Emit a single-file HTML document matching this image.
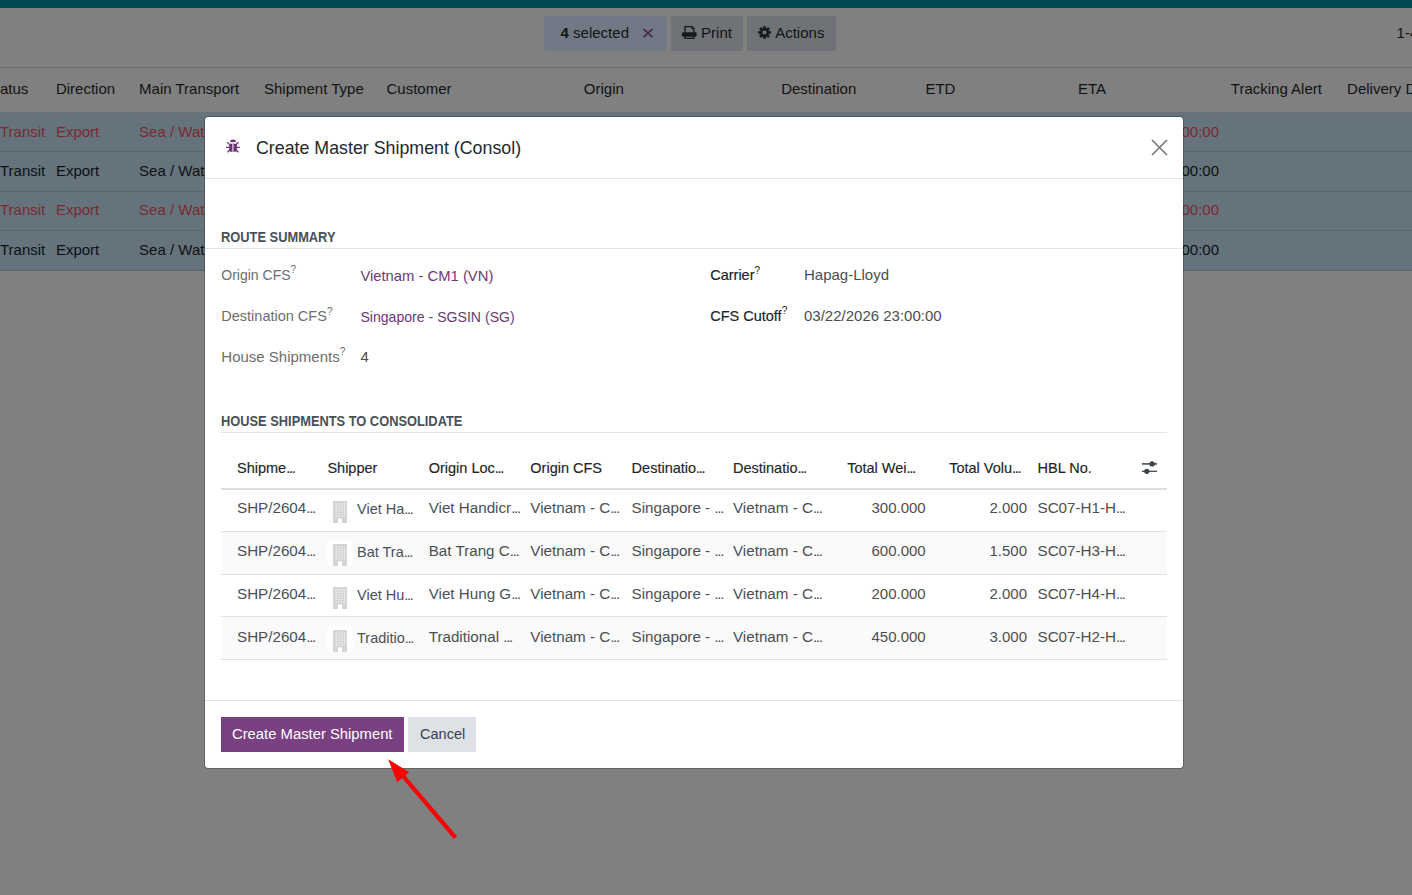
<!DOCTYPE html>
<html><head><meta charset="utf-8"><title>Create Master Shipment</title>
<style>
html,body{margin:0;padding:0;width:1412px;height:895px;overflow:hidden;background:#808080;font-family:"Liberation Sans",sans-serif;}
.t{position:absolute;white-space:nowrap;line-height:1;}
.r{position:absolute;}
.el{letter-spacing:-1.3px;margin-right:1.3px}
sup{font-size:10px;vertical-align:top;position:relative;top:-2.5px;margin-left:0;line-height:1;font-weight:normal;-webkit-text-stroke:0}
</style></head><body>
<div class="r" style="left:0px;top:0px;width:1412px;height:8px;background:#004b52"></div>
<div class="r" style="left:0px;top:67px;width:1412px;height:1px;background:#6c7073"></div>
<div class="r" style="left:544px;top:16px;width:123px;height:35px;background:#707985;border-radius:4px"></div>
<div class="r" style="left:671px;top:16px;width:72px;height:35px;background:#6f7377;border-radius:0"></div>
<div class="r" style="left:747px;top:16px;width:89px;height:35px;background:#6f7377;border-radius:0"></div>
<div class="t" style="left:560.60px;top:24.70px;font-size:15px;color:#111417;font-weight:normal;"><b>4</b> selected</div>
<svg class="r" style="left:642px;top:28px" width="12" height="10" viewBox="0 0 12 10"><path d="M1.5 0.8 L10.5 9.2 M10.5 0.8 L1.5 9.2" stroke="#4d2650" stroke-width="1.6"/></svg>
<svg class="r" style="left:682px;top:26px" width="15" height="13" viewBox="0 0 15 13"><path d="M3 6.5V0.65H10.1L12 2.55V6.5" stroke="#17191c" stroke-width="1.3" fill="none"/><path d="M9.8 0.65V2.9H12" stroke="#17191c" stroke-width="0.9" fill="none"/><rect x="0" y="6.3" width="14.6" height="4.4" rx="1.2" fill="#17191c"/><path d="M3 10.5V12.35H12V10.5" stroke="#17191c" stroke-width="1.3" fill="none"/></svg>
<div class="t" style="left:701.10px;top:24.70px;font-size:15px;color:#111417;font-weight:normal;">Print</div>
<svg class="r" style="left:758px;top:26px" width="13" height="13" viewBox="0 0 13 13"><path fill="#17191c" fill-rule="evenodd" d="M5.16 2.10 L5.04 0.17 L7.96 0.17 L7.84 2.10 L8.66 2.44 L9.94 0.99 L12.01 3.06 L10.56 4.34 L10.90 5.16 L12.83 5.04 L12.83 7.96 L10.90 7.84 L10.56 8.66 L12.01 9.94 L9.94 12.01 L8.66 10.56 L7.84 10.90 L7.96 12.83 L5.04 12.83 L5.16 10.90 L4.34 10.56 L3.06 12.01 L0.99 9.94 L2.44 8.66 L2.10 7.84 L0.17 7.96 L0.17 5.04 L2.10 5.16 L2.44 4.34 L0.99 3.06 L3.06 0.99 L4.34 2.44z M8.60 6.50a2.1 2.1 0 1 0 -4.2 0a2.1 2.1 0 1 0 4.2 0z"/></svg>
<div class="t" style="left:775.20px;top:24.70px;font-size:15px;color:#111417;font-weight:normal;">Actions</div>
<div class="t" style="left:1396.60px;top:25.10px;font-size:15px;color:#111417;font-weight:normal;">1-4</div>
<div class="t" style="left:0.00px;top:81.30px;font-size:15px;color:#101214;font-weight:normal;">atus</div>
<div class="t" style="left:55.90px;top:81.30px;font-size:15px;color:#101214;font-weight:normal;">Direction</div>
<div class="t" style="left:139.10px;top:81.30px;font-size:15px;color:#101214;font-weight:normal;">Main Transport</div>
<div class="t" style="left:264.00px;top:81.30px;font-size:15px;color:#101214;font-weight:normal;">Shipment Type</div>
<div class="t" style="left:386.50px;top:81.30px;font-size:15px;color:#101214;font-weight:normal;">Customer</div>
<div class="t" style="left:583.80px;top:81.30px;font-size:15px;color:#101214;font-weight:normal;">Origin</div>
<div class="t" style="left:781.20px;top:81.30px;font-size:15px;color:#101214;font-weight:normal;">Destination</div>
<div class="t" style="left:925.40px;top:81.30px;font-size:15px;color:#101214;font-weight:normal;">ETD</div>
<div class="t" style="left:1078.00px;top:81.30px;font-size:15px;color:#101214;font-weight:normal;">ETA</div>
<div class="t" style="left:1230.80px;top:81.30px;font-size:15px;color:#101214;font-weight:normal;">Tracking Alert</div>
<div class="t" style="left:1347.10px;top:81.30px;font-size:15px;color:#101214;font-weight:normal;">Delivery Date</div>
<div class="r" style="left:0px;top:112px;width:1412px;height:1px;background:#6c7073"></div>
<div class="r" style="left:0px;top:113px;width:1412px;height:158px;background:#65737d"></div>
<div class="r" style="left:0px;top:151px;width:1412px;height:1px;background:#59666e"></div>
<div class="r" style="left:0px;top:191px;width:1412px;height:1px;background:#59666e"></div>
<div class="r" style="left:0px;top:230px;width:1412px;height:1px;background:#59666e"></div>
<div class="r" style="left:0px;top:270px;width:1412px;height:1px;background:#59666e"></div>
<div class="t" style="left:0.00px;top:123.90px;font-size:15px;color:#7c2a2e;font-weight:normal;">Transit</div>
<div class="t" style="left:55.90px;top:123.90px;font-size:15px;color:#7c2a2e;font-weight:normal;">Export</div>
<div class="t" style="left:139.10px;top:123.90px;font-size:15px;color:#7c2a2e;font-weight:normal;">Sea / Water</div>
<div class="t" style="right:193.00px;top:123.90px;font-size:15px;color:#7c2a2e;font-weight:normal;">03/25/2026 10:00:00</div>
<div class="t" style="left:0.00px;top:162.90px;font-size:15px;color:#0e1012;font-weight:normal;">Transit</div>
<div class="t" style="left:55.90px;top:162.90px;font-size:15px;color:#0e1012;font-weight:normal;">Export</div>
<div class="t" style="left:139.10px;top:162.90px;font-size:15px;color:#0e1012;font-weight:normal;">Sea / Water</div>
<div class="t" style="right:193.00px;top:162.90px;font-size:15px;color:#0e1012;font-weight:normal;">03/25/2026 10:00:00</div>
<div class="t" style="left:0.00px;top:202.30px;font-size:15px;color:#7c2a2e;font-weight:normal;">Transit</div>
<div class="t" style="left:55.90px;top:202.30px;font-size:15px;color:#7c2a2e;font-weight:normal;">Export</div>
<div class="t" style="left:139.10px;top:202.30px;font-size:15px;color:#7c2a2e;font-weight:normal;">Sea / Water</div>
<div class="t" style="right:193.00px;top:202.30px;font-size:15px;color:#7c2a2e;font-weight:normal;">03/25/2026 10:00:00</div>
<div class="t" style="left:0.00px;top:241.50px;font-size:15px;color:#0e1012;font-weight:normal;">Transit</div>
<div class="t" style="left:55.90px;top:241.50px;font-size:15px;color:#0e1012;font-weight:normal;">Export</div>
<div class="t" style="left:139.10px;top:241.50px;font-size:15px;color:#0e1012;font-weight:normal;">Sea / Water</div>
<div class="t" style="right:193.00px;top:241.50px;font-size:15px;color:#0e1012;font-weight:normal;">03/25/2026 10:00:00</div>
<div class="r" style="left:204px;top:116px;width:978px;height:651px;background:#fff;background-clip:padding-box;border:1px solid rgba(0,0,0,.22);border-radius:4px">
</div>
<div class="r" style="left:205px;top:178px;width:978px;height:1px;background:#dee2e6"></div>
<svg class="r" style="left:220px;top:134px" width="26" height="26" viewBox="0 0 26 26"><path d="M10.2 7.9a2.8 2.3 0 0 1 5.6 0z" fill="#6d3274"/><rect x="9.6" y="8.6" width="7.4" height="1.1" fill="#c9b2cd"/><path d="M9.2 10h7.7v6.3a1.5 1.5 0 0 1-1.5 1.5h-4.7a1.5 1.5 0 0 1-1.5-1.5z" fill="#6d3274"/><rect x="12.1" y="10" width="1.6" height="7.8" fill="#c9b2cd"/><path d="M7.2 8.2L9.8 10.6M18.6 8.2L16 10.6M6.1 13.4H9.2M16.9 13.4H19.8M7.4 18.3L9.6 16M18.6 18.3L16.4 16" stroke="#6d3274" stroke-width="1.2"/></svg>
<div class="t" style="left:255.60px;top:138.54px;font-size:18.5px;color:#24282c;font-weight:normal;transform:scaleX(0.962);transform-origin:0 0">Create Master Shipment (Consol)</div>
<svg class="r" style="left:1151px;top:139px" width="17" height="17" viewBox="0 0 17 17"><path d="M1 1 L16 16 M16 1 L1 16" stroke="#777b80" stroke-width="1.7"/></svg>
<div class="t" style="left:221.30px;top:229.10px;font-size:15px;color:#495057;font-weight:bold;transform:scaleX(0.857);transform-origin:0 0">ROUTE SUMMARY</div>
<div class="r" style="left:205px;top:248px;width:978px;height:1px;background:#e3e3e3"></div>
<div class="t" style="left:221.30px;top:267.75px;font-size:14px;color:#6b6e71;font-weight:normal;">Origin CFS<sup>?</sup></div>
<div class="t" style="left:221.30px;top:309.33px;font-size:14.5px;color:#6b6e71;font-weight:normal;">Destination CFS<sup>?</sup></div>
<div class="t" style="left:221.30px;top:349.00px;font-size:15px;color:#6b6e71;font-weight:normal;">House Shipments<sup>?</sup></div>
<div class="t" style="left:360.40px;top:268.67px;font-size:14.8px;color:#6b3a72;font-weight:normal;">Vietnam - CM1 (VN)</div>
<div class="t" style="left:360.40px;top:310.06px;font-size:14.1px;color:#6b3a72;font-weight:normal;">Singapore - SGSIN (SG)</div>
<div class="t" style="left:360.40px;top:349.87px;font-size:14.8px;color:#4a4e52;font-weight:normal;">4</div>
<div class="t" style="left:710.20px;top:268.13px;font-size:14.5px;color:#212529;font-weight:normal;-webkit-text-stroke:0.18px #212529">Carrier<sup>?</sup></div>
<div class="t" style="left:710.20px;top:308.93px;font-size:14.5px;color:#212529;font-weight:normal;-webkit-text-stroke:0.18px #212529">CFS Cutoff<sup>?</sup></div>
<div class="t" style="left:804.00px;top:266.90px;font-size:15px;color:#4a4e52;font-weight:normal;">Hapag-Lloyd</div>
<div class="t" style="left:804.00px;top:307.90px;font-size:15px;color:#4a4e52;font-weight:normal;">03/22/2026 23:00:00</div>
<div class="t" style="left:221.40px;top:413.10px;font-size:15px;color:#495057;font-weight:bold;transform:scaleX(0.856);transform-origin:0 0">HOUSE SHIPMENTS TO CONSOLIDATE</div>
<div class="r" style="left:221px;top:432px;width:946px;height:1px;background:#e3e3e3"></div>
<div class="t" style="left:237.00px;top:460.63px;font-size:14.5px;color:#212529;font-weight:normal;-webkit-text-stroke:0.15px #212529">Shipme<span class="el">...</span></div>
<div class="t" style="left:327.40px;top:460.63px;font-size:14.5px;color:#212529;font-weight:normal;-webkit-text-stroke:0.15px #212529">Shipper</div>
<div class="t" style="left:428.70px;top:460.63px;font-size:14.5px;color:#212529;font-weight:normal;-webkit-text-stroke:0.15px #212529">Origin Loc<span class="el">...</span></div>
<div class="t" style="left:530.30px;top:460.63px;font-size:14.5px;color:#212529;font-weight:normal;-webkit-text-stroke:0.15px #212529">Origin CFS</div>
<div class="t" style="left:631.60px;top:460.63px;font-size:14.5px;color:#212529;font-weight:normal;-webkit-text-stroke:0.15px #212529">Destinatio<span class="el">...</span></div>
<div class="t" style="left:733.00px;top:460.63px;font-size:14.5px;color:#212529;font-weight:normal;-webkit-text-stroke:0.15px #212529">Destinatio<span class="el">...</span></div>
<div class="t" style="left:847.20px;top:460.63px;font-size:14.5px;color:#212529;font-weight:normal;-webkit-text-stroke:0.15px #212529">Total Wei<span class="el">...</span></div>
<div class="t" style="left:949.20px;top:460.63px;font-size:14.5px;color:#212529;font-weight:normal;-webkit-text-stroke:0.15px #212529">Total Volu<span class="el">...</span></div>
<div class="t" style="left:1037.50px;top:460.63px;font-size:14.5px;color:#212529;font-weight:normal;-webkit-text-stroke:0.15px #212529">HBL No.</div>
<svg class="r" style="left:1136px;top:455px" width="28" height="25" viewBox="0 0 28 25"><path d="M5.9 8.9H21.1" stroke="#3d434a" stroke-width="1.5"/><path d="M5.9 16.3H21.1" stroke="#3d434a" stroke-width="1.25"/><circle cx="16.1" cy="8.9" r="2.7" fill="#3d434a"/><circle cx="10.8" cy="16.3" r="2.6" fill="#3d434a"/></svg>
<div class="r" style="left:221px;top:488px;width:946px;height:2px;background:#d9dee3"></div>
<div class="r" style="left:221px;top:531px;width:946px;height:1px;background:#dee2e6"></div>
<div class="r" style="left:221px;top:532px;width:946px;height:42px;background:#fafafa"></div>
<div class="r" style="left:221px;top:574px;width:946px;height:1px;background:#dee2e6"></div>
<div class="r" style="left:221px;top:616px;width:946px;height:1px;background:#dee2e6"></div>
<div class="r" style="left:221px;top:617px;width:946px;height:42px;background:#fafafa"></div>
<div class="r" style="left:221px;top:659px;width:946px;height:1px;background:#dee2e6"></div>
<div class="r" style="left:327px;top:497.19999999999993px;width:26px;height:26px;background:#fff;border-radius:4px"></div>
<div class="r" style="left:333px;top:500.8px;width:14px;height:22px"><svg width="14" height="22" viewBox="0 0 14 23" preserveAspectRatio="none"><path fill="#d4d4d4" d="M0 0h14v23H9v-4.6H5V23H0z"/><rect x="2.7" y="2.4" width="1.3" height="1.3" fill="#f4f4f4"/><rect x="2.7" y="4.9" width="1.3" height="1.3" fill="#f4f4f4"/><rect x="2.7" y="7.4" width="1.3" height="1.3" fill="#f4f4f4"/><rect x="2.7" y="9.9" width="1.3" height="1.3" fill="#f4f4f4"/><rect x="2.7" y="12.4" width="1.3" height="1.3" fill="#f4f4f4"/><rect x="2.7" y="14.9" width="1.3" height="1.3" fill="#f4f4f4"/><rect x="5.3" y="2.4" width="1.3" height="1.3" fill="#f4f4f4"/><rect x="5.3" y="4.9" width="1.3" height="1.3" fill="#f4f4f4"/><rect x="5.3" y="7.4" width="1.3" height="1.3" fill="#f4f4f4"/><rect x="5.3" y="9.9" width="1.3" height="1.3" fill="#f4f4f4"/><rect x="5.3" y="12.4" width="1.3" height="1.3" fill="#f4f4f4"/><rect x="5.3" y="14.9" width="1.3" height="1.3" fill="#f4f4f4"/><rect x="8.3" y="2.4" width="1.3" height="1.3" fill="#f4f4f4"/><rect x="8.3" y="4.9" width="1.3" height="1.3" fill="#f4f4f4"/><rect x="8.3" y="7.4" width="1.3" height="1.3" fill="#f4f4f4"/><rect x="8.3" y="9.9" width="1.3" height="1.3" fill="#f4f4f4"/><rect x="8.3" y="12.4" width="1.3" height="1.3" fill="#f4f4f4"/><rect x="8.3" y="14.9" width="1.3" height="1.3" fill="#f4f4f4"/><rect x="10.9" y="2.4" width="1.3" height="1.3" fill="#f4f4f4"/><rect x="10.9" y="4.9" width="1.3" height="1.3" fill="#f4f4f4"/><rect x="10.9" y="7.4" width="1.3" height="1.3" fill="#f4f4f4"/><rect x="10.9" y="9.9" width="1.3" height="1.3" fill="#f4f4f4"/><rect x="10.9" y="12.4" width="1.3" height="1.3" fill="#f4f4f4"/><rect x="10.9" y="14.9" width="1.3" height="1.3" fill="#f4f4f4"/></svg></div>
<div class="t" style="left:237.00px;top:499.93px;font-size:15.2px;color:#4a4f54;font-weight:normal;">SHP/2604<span class="el">...</span></div>
<div class="t" style="left:357.00px;top:501.83px;font-size:14.5px;color:#4a4f54;font-weight:normal;">Viet Ha<span class="el">...</span></div>
<div class="t" style="left:428.70px;top:499.93px;font-size:15.2px;color:#4a4f54;font-weight:normal;">Viet Handicr<span class="el">...</span></div>
<div class="t" style="left:530.30px;top:499.93px;font-size:15.2px;color:#4a4f54;font-weight:normal;">Vietnam - C<span class="el">...</span></div>
<div class="t" style="left:631.60px;top:499.93px;font-size:15.2px;color:#4a4f54;font-weight:normal;">Singapore - <span class="el">...</span></div>
<div class="t" style="left:733.00px;top:499.93px;font-size:15.2px;color:#4a4f54;font-weight:normal;">Vietnam - C<span class="el">...</span></div>
<div class="t" style="right:486.30px;top:500.10px;font-size:15px;color:#4a4f54;font-weight:normal;">300.000</div>
<div class="t" style="right:385.00px;top:500.10px;font-size:15px;color:#4a4f54;font-weight:normal;">2.000</div>
<div class="t" style="left:1037.50px;top:499.93px;font-size:15.2px;color:#4a4f54;font-weight:normal;">SC07-H1-H<span class="el">...</span></div>
<div class="r" style="left:327px;top:540.1999999999999px;width:26px;height:26px;background:#fff;border-radius:4px"></div>
<div class="r" style="left:333px;top:543.8px;width:14px;height:22px"><svg width="14" height="22" viewBox="0 0 14 23" preserveAspectRatio="none"><path fill="#d4d4d4" d="M0 0h14v23H9v-4.6H5V23H0z"/><rect x="2.7" y="2.4" width="1.3" height="1.3" fill="#f4f4f4"/><rect x="2.7" y="4.9" width="1.3" height="1.3" fill="#f4f4f4"/><rect x="2.7" y="7.4" width="1.3" height="1.3" fill="#f4f4f4"/><rect x="2.7" y="9.9" width="1.3" height="1.3" fill="#f4f4f4"/><rect x="2.7" y="12.4" width="1.3" height="1.3" fill="#f4f4f4"/><rect x="2.7" y="14.9" width="1.3" height="1.3" fill="#f4f4f4"/><rect x="5.3" y="2.4" width="1.3" height="1.3" fill="#f4f4f4"/><rect x="5.3" y="4.9" width="1.3" height="1.3" fill="#f4f4f4"/><rect x="5.3" y="7.4" width="1.3" height="1.3" fill="#f4f4f4"/><rect x="5.3" y="9.9" width="1.3" height="1.3" fill="#f4f4f4"/><rect x="5.3" y="12.4" width="1.3" height="1.3" fill="#f4f4f4"/><rect x="5.3" y="14.9" width="1.3" height="1.3" fill="#f4f4f4"/><rect x="8.3" y="2.4" width="1.3" height="1.3" fill="#f4f4f4"/><rect x="8.3" y="4.9" width="1.3" height="1.3" fill="#f4f4f4"/><rect x="8.3" y="7.4" width="1.3" height="1.3" fill="#f4f4f4"/><rect x="8.3" y="9.9" width="1.3" height="1.3" fill="#f4f4f4"/><rect x="8.3" y="12.4" width="1.3" height="1.3" fill="#f4f4f4"/><rect x="8.3" y="14.9" width="1.3" height="1.3" fill="#f4f4f4"/><rect x="10.9" y="2.4" width="1.3" height="1.3" fill="#f4f4f4"/><rect x="10.9" y="4.9" width="1.3" height="1.3" fill="#f4f4f4"/><rect x="10.9" y="7.4" width="1.3" height="1.3" fill="#f4f4f4"/><rect x="10.9" y="9.9" width="1.3" height="1.3" fill="#f4f4f4"/><rect x="10.9" y="12.4" width="1.3" height="1.3" fill="#f4f4f4"/><rect x="10.9" y="14.9" width="1.3" height="1.3" fill="#f4f4f4"/></svg></div>
<div class="t" style="left:237.00px;top:542.93px;font-size:15.2px;color:#4a4f54;font-weight:normal;">SHP/2604<span class="el">...</span></div>
<div class="t" style="left:357.00px;top:544.83px;font-size:14.5px;color:#4a4f54;font-weight:normal;">Bat Tra<span class="el">...</span></div>
<div class="t" style="left:428.70px;top:542.93px;font-size:15.2px;color:#4a4f54;font-weight:normal;">Bat Trang C<span class="el">...</span></div>
<div class="t" style="left:530.30px;top:542.93px;font-size:15.2px;color:#4a4f54;font-weight:normal;">Vietnam - C<span class="el">...</span></div>
<div class="t" style="left:631.60px;top:542.93px;font-size:15.2px;color:#4a4f54;font-weight:normal;">Singapore - <span class="el">...</span></div>
<div class="t" style="left:733.00px;top:542.93px;font-size:15.2px;color:#4a4f54;font-weight:normal;">Vietnam - C<span class="el">...</span></div>
<div class="t" style="right:486.30px;top:543.10px;font-size:15px;color:#4a4f54;font-weight:normal;">600.000</div>
<div class="t" style="right:385.00px;top:543.10px;font-size:15px;color:#4a4f54;font-weight:normal;">1.500</div>
<div class="t" style="left:1037.50px;top:542.93px;font-size:15.2px;color:#4a4f54;font-weight:normal;">SC07-H3-H<span class="el">...</span></div>
<div class="r" style="left:327px;top:583.1999999999999px;width:26px;height:26px;background:#fff;border-radius:4px"></div>
<div class="r" style="left:333px;top:586.8px;width:14px;height:22px"><svg width="14" height="22" viewBox="0 0 14 23" preserveAspectRatio="none"><path fill="#d4d4d4" d="M0 0h14v23H9v-4.6H5V23H0z"/><rect x="2.7" y="2.4" width="1.3" height="1.3" fill="#f4f4f4"/><rect x="2.7" y="4.9" width="1.3" height="1.3" fill="#f4f4f4"/><rect x="2.7" y="7.4" width="1.3" height="1.3" fill="#f4f4f4"/><rect x="2.7" y="9.9" width="1.3" height="1.3" fill="#f4f4f4"/><rect x="2.7" y="12.4" width="1.3" height="1.3" fill="#f4f4f4"/><rect x="2.7" y="14.9" width="1.3" height="1.3" fill="#f4f4f4"/><rect x="5.3" y="2.4" width="1.3" height="1.3" fill="#f4f4f4"/><rect x="5.3" y="4.9" width="1.3" height="1.3" fill="#f4f4f4"/><rect x="5.3" y="7.4" width="1.3" height="1.3" fill="#f4f4f4"/><rect x="5.3" y="9.9" width="1.3" height="1.3" fill="#f4f4f4"/><rect x="5.3" y="12.4" width="1.3" height="1.3" fill="#f4f4f4"/><rect x="5.3" y="14.9" width="1.3" height="1.3" fill="#f4f4f4"/><rect x="8.3" y="2.4" width="1.3" height="1.3" fill="#f4f4f4"/><rect x="8.3" y="4.9" width="1.3" height="1.3" fill="#f4f4f4"/><rect x="8.3" y="7.4" width="1.3" height="1.3" fill="#f4f4f4"/><rect x="8.3" y="9.9" width="1.3" height="1.3" fill="#f4f4f4"/><rect x="8.3" y="12.4" width="1.3" height="1.3" fill="#f4f4f4"/><rect x="8.3" y="14.9" width="1.3" height="1.3" fill="#f4f4f4"/><rect x="10.9" y="2.4" width="1.3" height="1.3" fill="#f4f4f4"/><rect x="10.9" y="4.9" width="1.3" height="1.3" fill="#f4f4f4"/><rect x="10.9" y="7.4" width="1.3" height="1.3" fill="#f4f4f4"/><rect x="10.9" y="9.9" width="1.3" height="1.3" fill="#f4f4f4"/><rect x="10.9" y="12.4" width="1.3" height="1.3" fill="#f4f4f4"/><rect x="10.9" y="14.9" width="1.3" height="1.3" fill="#f4f4f4"/></svg></div>
<div class="t" style="left:237.00px;top:585.93px;font-size:15.2px;color:#4a4f54;font-weight:normal;">SHP/2604<span class="el">...</span></div>
<div class="t" style="left:357.00px;top:587.83px;font-size:14.5px;color:#4a4f54;font-weight:normal;">Viet Hu<span class="el">...</span></div>
<div class="t" style="left:428.70px;top:585.93px;font-size:15.2px;color:#4a4f54;font-weight:normal;">Viet Hung G<span class="el">...</span></div>
<div class="t" style="left:530.30px;top:585.93px;font-size:15.2px;color:#4a4f54;font-weight:normal;">Vietnam - C<span class="el">...</span></div>
<div class="t" style="left:631.60px;top:585.93px;font-size:15.2px;color:#4a4f54;font-weight:normal;">Singapore - <span class="el">...</span></div>
<div class="t" style="left:733.00px;top:585.93px;font-size:15.2px;color:#4a4f54;font-weight:normal;">Vietnam - C<span class="el">...</span></div>
<div class="t" style="right:486.30px;top:586.10px;font-size:15px;color:#4a4f54;font-weight:normal;">200.000</div>
<div class="t" style="right:385.00px;top:586.10px;font-size:15px;color:#4a4f54;font-weight:normal;">2.000</div>
<div class="t" style="left:1037.50px;top:585.93px;font-size:15.2px;color:#4a4f54;font-weight:normal;">SC07-H4-H<span class="el">...</span></div>
<div class="r" style="left:327px;top:626.0px;width:26px;height:26px;background:#fff;border-radius:4px"></div>
<div class="r" style="left:333px;top:629.6px;width:14px;height:22px"><svg width="14" height="22" viewBox="0 0 14 23" preserveAspectRatio="none"><path fill="#d4d4d4" d="M0 0h14v23H9v-4.6H5V23H0z"/><rect x="2.7" y="2.4" width="1.3" height="1.3" fill="#f4f4f4"/><rect x="2.7" y="4.9" width="1.3" height="1.3" fill="#f4f4f4"/><rect x="2.7" y="7.4" width="1.3" height="1.3" fill="#f4f4f4"/><rect x="2.7" y="9.9" width="1.3" height="1.3" fill="#f4f4f4"/><rect x="2.7" y="12.4" width="1.3" height="1.3" fill="#f4f4f4"/><rect x="2.7" y="14.9" width="1.3" height="1.3" fill="#f4f4f4"/><rect x="5.3" y="2.4" width="1.3" height="1.3" fill="#f4f4f4"/><rect x="5.3" y="4.9" width="1.3" height="1.3" fill="#f4f4f4"/><rect x="5.3" y="7.4" width="1.3" height="1.3" fill="#f4f4f4"/><rect x="5.3" y="9.9" width="1.3" height="1.3" fill="#f4f4f4"/><rect x="5.3" y="12.4" width="1.3" height="1.3" fill="#f4f4f4"/><rect x="5.3" y="14.9" width="1.3" height="1.3" fill="#f4f4f4"/><rect x="8.3" y="2.4" width="1.3" height="1.3" fill="#f4f4f4"/><rect x="8.3" y="4.9" width="1.3" height="1.3" fill="#f4f4f4"/><rect x="8.3" y="7.4" width="1.3" height="1.3" fill="#f4f4f4"/><rect x="8.3" y="9.9" width="1.3" height="1.3" fill="#f4f4f4"/><rect x="8.3" y="12.4" width="1.3" height="1.3" fill="#f4f4f4"/><rect x="8.3" y="14.9" width="1.3" height="1.3" fill="#f4f4f4"/><rect x="10.9" y="2.4" width="1.3" height="1.3" fill="#f4f4f4"/><rect x="10.9" y="4.9" width="1.3" height="1.3" fill="#f4f4f4"/><rect x="10.9" y="7.4" width="1.3" height="1.3" fill="#f4f4f4"/><rect x="10.9" y="9.9" width="1.3" height="1.3" fill="#f4f4f4"/><rect x="10.9" y="12.4" width="1.3" height="1.3" fill="#f4f4f4"/><rect x="10.9" y="14.9" width="1.3" height="1.3" fill="#f4f4f4"/></svg></div>
<div class="t" style="left:237.00px;top:628.73px;font-size:15.2px;color:#4a4f54;font-weight:normal;">SHP/2604<span class="el">...</span></div>
<div class="t" style="left:357.00px;top:630.63px;font-size:14.5px;color:#4a4f54;font-weight:normal;">Traditio<span class="el">...</span></div>
<div class="t" style="left:428.70px;top:628.73px;font-size:15.2px;color:#4a4f54;font-weight:normal;">Traditional <span class="el">...</span></div>
<div class="t" style="left:530.30px;top:628.73px;font-size:15.2px;color:#4a4f54;font-weight:normal;">Vietnam - C<span class="el">...</span></div>
<div class="t" style="left:631.60px;top:628.73px;font-size:15.2px;color:#4a4f54;font-weight:normal;">Singapore - <span class="el">...</span></div>
<div class="t" style="left:733.00px;top:628.73px;font-size:15.2px;color:#4a4f54;font-weight:normal;">Vietnam - C<span class="el">...</span></div>
<div class="t" style="right:486.30px;top:628.90px;font-size:15px;color:#4a4f54;font-weight:normal;">450.000</div>
<div class="t" style="right:385.00px;top:628.90px;font-size:15px;color:#4a4f54;font-weight:normal;">3.000</div>
<div class="t" style="left:1037.50px;top:628.73px;font-size:15.2px;color:#4a4f54;font-weight:normal;">SC07-H2-H<span class="el">...</span></div>
<div class="r" style="left:205px;top:700px;width:978px;height:1px;background:#dee2e6"></div>
<div class="r" style="left:221px;top:717px;width:183px;height:35px;background:#7b4082;border-radius:0"></div>
<div class="t" style="left:232.40px;top:726.15px;font-size:15.3px;color:#ffffff;font-weight:normal;transform:scaleX(0.968);transform-origin:0 0">Create Master Shipment</div>
<div class="r" style="left:408px;top:717px;width:68px;height:35px;background:#dee2e6"></div>
<div class="t" style="left:419.80px;top:725.95px;font-size:15.3px;color:#3a3e43;font-weight:normal;transform:scaleX(0.95);transform-origin:0 0">Cancel</div>
<svg class="r" style="left:0;top:0" width="1412" height="895" viewBox="0 0 1412 895"><path d="M455.5 837.7 L397 769" stroke="#ff0000" stroke-width="4.2" stroke-linecap="butt"/><path d="M388.1 759.2 L409.3 772.2 L397.2 782.2 z" fill="#ff0000"/></svg>
</body></html>
